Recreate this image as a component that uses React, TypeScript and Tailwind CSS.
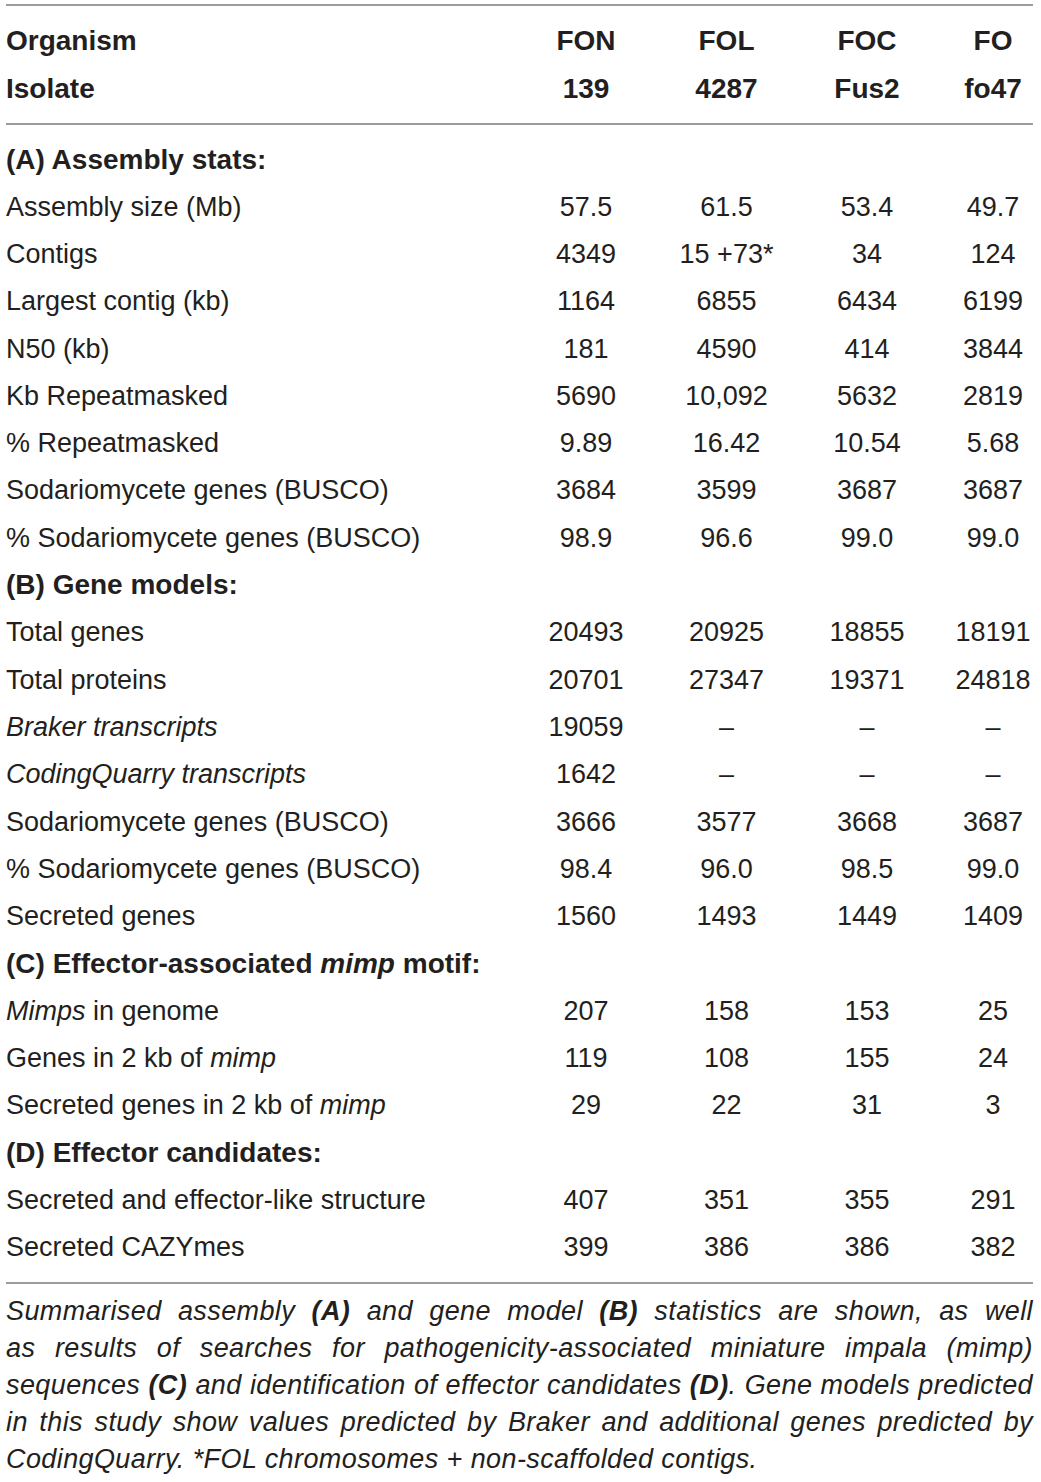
import React from "react";

type Row =
  | { kind: "section"; label: React.ReactNode }
  | { kind: "data"; label: React.ReactNode; values: string[] };

const rows: Row[] = [
  { kind: "section", label: "(A) Assembly stats:" },
  { kind: "data", label: "Assembly size (Mb)", values: ["57.5", "61.5", "53.4", "49.7"] },
  { kind: "data", label: "Contigs", values: ["4349", "15 +73*", "34", "124"] },
  { kind: "data", label: "Largest contig (kb)", values: ["1164", "6855", "6434", "6199"] },
  { kind: "data", label: "N50 (kb)", values: ["181", "4590", "414", "3844"] },
  { kind: "data", label: "Kb Repeatmasked", values: ["5690", "10,092", "5632", "2819"] },
  { kind: "data", label: "% Repeatmasked", values: ["9.89", "16.42", "10.54", "5.68"] },
  { kind: "data", label: "Sodariomycete genes (BUSCO)", values: ["3684", "3599", "3687", "3687"] },
  { kind: "data", label: "% Sodariomycete genes (BUSCO)", values: ["98.9", "96.6", "99.0", "99.0"] },
  { kind: "section", label: "(B) Gene models:" },
  { kind: "data", label: "Total genes", values: ["20493", "20925", "18855", "18191"] },
  { kind: "data", label: "Total proteins", values: ["20701", "27347", "19371", "24818"] },
  { kind: "data", label: <i>Braker transcripts</i>, values: ["19059", "–", "–", "–"] },
  { kind: "data", label: <i>CodingQuarry transcripts</i>, values: ["1642", "–", "–", "–"] },
  { kind: "data", label: "Sodariomycete genes (BUSCO)", values: ["3666", "3577", "3668", "3687"] },
  { kind: "data", label: "% Sodariomycete genes (BUSCO)", values: ["98.4", "96.0", "98.5", "99.0"] },
  { kind: "data", label: "Secreted genes", values: ["1560", "1493", "1449", "1409"] },
  {
    kind: "section",
    label: (
      <>
        (C) Effector-associated <i>mimp</i> motif:
      </>
    ),
  },
  {
    kind: "data",
    label: (
      <>
        <i>Mimps</i> in genome
      </>
    ),
    values: ["207", "158", "153", "25"],
  },
  {
    kind: "data",
    label: (
      <>
        Genes in 2 kb of <i>mimp</i>
      </>
    ),
    values: ["119", "108", "155", "24"],
  },
  {
    kind: "data",
    label: (
      <>
        Secreted genes in 2 kb of <i>mimp</i>
      </>
    ),
    values: ["29", "22", "31", "3"],
  },
  { kind: "section", label: "(D) Effector candidates:" },
  { kind: "data", label: "Secreted and effector-like structure", values: ["407", "351", "355", "291"] },
  { kind: "data", label: "Secreted CAZYmes", values: ["399", "386", "386", "382"] },
];

const gridCols = "grid grid-cols-[510px_140px_141px_140px_96px]";

function ValueCell({ v, last }: { v: string; last?: boolean }) {
  return (
    <div className={last ? "flex justify-center pl-4" : "flex justify-center"}>
      <span className="whitespace-nowrap">{v}</span>
    </div>
  );
}

function Rule() {
  return <div className="h-[2px] w-full bg-[#9c9c9c]" />;
}

export default function App() {
  return (
    <div
      className="w-[1041px] bg-white pl-[6px] pt-[4px] text-[#231f20]"
      style={{ fontFamily: '"Liberation Sans", Arial, sans-serif' }}
    >
      <div className="w-[1027px]">
        <Rule />
        <div className="pt-[11px] pb-[10px] text-[28px] font-bold">
          <div className={`${gridCols} h-[48px] items-center`}>
            <div>Organism</div>
            <ValueCell v="FON" />
            <ValueCell v="FOL" />
            <ValueCell v="FOC" />
            <ValueCell v="FO" last />
          </div>
          <div className={`${gridCols} h-[48px] items-center`}>
            <div>Isolate</div>
            <ValueCell v="139" />
            <ValueCell v="4287" />
            <ValueCell v="Fus2" />
            <ValueCell v="fo47" last />
          </div>
        </div>
        <Rule />
        <div className="pt-[11px] pb-[11px] text-[27px]">
          {rows.map((r, i) =>
            r.kind === "section" ? (
              <div key={i} className="flex h-[47.3px] items-center text-[28px] font-bold">
                <span className="whitespace-nowrap">{r.label}</span>
              </div>
            ) : (
              <div key={i} className={`${gridCols} h-[47.3px] items-center`}>
                <div className="whitespace-nowrap">{r.label}</div>
                {r.values.map((v, j) => (
                  <ValueCell key={j} v={v} last={j === 3} />
                ))}
              </div>
            )
          )}
        </div>
        <Rule />
        <div className="pt-[9px] text-[27px] italic leading-[37px] tracking-[0.4px]">
          <div className="text-justify [text-align-last:justify] whitespace-nowrap">
            Summarised assembly <b>(A)</b> and gene model <b>(B)</b> statistics are shown, as well
          </div>
          <div className="text-justify [text-align-last:justify] whitespace-nowrap">
            as results of searches for pathogenicity-associated miniature impala (mimp)
          </div>
          <div className="text-justify [text-align-last:justify] whitespace-nowrap">
            sequences <b>(C)</b> and identification of effector candidates <b>(D)</b>. Gene models predicted
          </div>
          <div className="text-justify [text-align-last:justify] whitespace-nowrap">
            in this study show values predicted by Braker and additional genes predicted by
          </div>
          <div className="whitespace-nowrap">CodingQuarry. *FOL chromosomes + non-scaffolded contigs.</div>
        </div>
      </div>
    </div>
  );
}
